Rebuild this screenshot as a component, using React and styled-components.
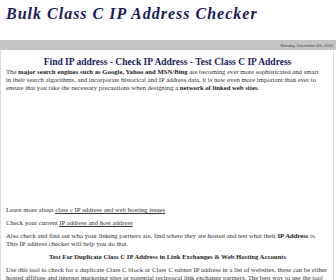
import React from 'react'
import styled, {createGlobalStyle} from 'styled-components'

const Global = createGlobalStyle`
  html, body {
    margin: 0;
    padding: 0;
    background: #fff;
  }
  body {
    width: 336px;
    height: 280px;
    overflow: hidden;
    font-family: "Liberation Serif", serif;
  }
`

const Header = styled.div`
  height: 40px;
  padding: 5px 0 0 6px;
  box-sizing: border-box;
`

const Title = styled.h1`
  margin: 0;
  font-family: "Liberation Serif", serif;
  font-style: italic;
  font-weight: bold;
  font-size: 16px;
  line-height: 18px;
  letter-spacing: 1px;
  color: #1b1b5c;
`

const DateBar = styled.div`
  height: 10px;
  background: #c4c4c4;
  display: flex;
  justify-content: flex-end;
  align-items: center;
  padding-right: 3px;
  font-family: "Liberation Sans", sans-serif;
  font-size: 4px;
  color: #444;
`

const Content = styled.div`
  margin: 0 2px 0 0;
  border-left: 1px solid #ddd;
  border-right: 1px solid #ddd;
  padding: 7px 4px 0 5px;
  font-size: 6.7px;
  line-height: 8px;
  color: #333;
  white-space: nowrap;
`

const Heading = styled.h2`
  margin: 0;
  text-align: center;
  font-size: 9.5px;
  line-height: 11px;
  font-weight: bold;
  color: #1b1b5c;
`

const SubHeading = styled.h3`
  margin: 0 0 5px;
  text-align: center;
  font-size: 6.7px;
  line-height: 8px;
  font-weight: bold;
  color: #222;
`

const Para = styled.p`
  margin: 0 0 5px;
`

const Strong = styled.b`
  color: #222;
`

const Link = styled.a`
  color: #333;
  text-decoration: underline;
`

const AdSpace = styled.div`
  height: 109px;
`

export default function App() {
  return (
    <>
      <Global />
      <Header>
        <Title>Bulk Class C IP Address Checker</Title>
      </Header>
      <DateBar>Monday, December 6th, 2010</DateBar>
      <Content>
        <Heading>Find IP address - Check IP Address - Test Class C IP Address</Heading>
        <Para>
          The <Strong>major search engines such as Google, Yahoo and MSN/Bing</Strong> are becoming ever more sophisticated and smart<br />
          in their search algorithms, and incorporate historical and IP address data, it is now even more important than ever to<br />
          ensure that you take the necessary precautions when designing a <Strong>network of linked web sites</Strong>.
        </Para>
        <AdSpace />
        <Para>Learn more about <Link href="#">class c IP address and web hosting issues</Link></Para>
        <Para>Check your current <Link href="#">IP address and host address</Link></Para>
        <Para>
          Also check and find out who your linking partners are, find where they are hosted and test what their <Strong>IP Address</Strong> is.<br />
          This IP address checker will help you do that.
        </Para>
        <SubHeading>Test For Duplicate Class C IP Address in Link Exchanges &amp; Web Hosting Accounts</SubHeading>
        <Para>
          Use this tool to check for a duplicate Class C block or Class C subnet IP address in a list of websites, these can be either<br />
          hosted affiliate and internet marketing sites or potential reciprocal link exchange partners. The best way to use the tool
        </Para>
      </Content>
    </>
  )
}
